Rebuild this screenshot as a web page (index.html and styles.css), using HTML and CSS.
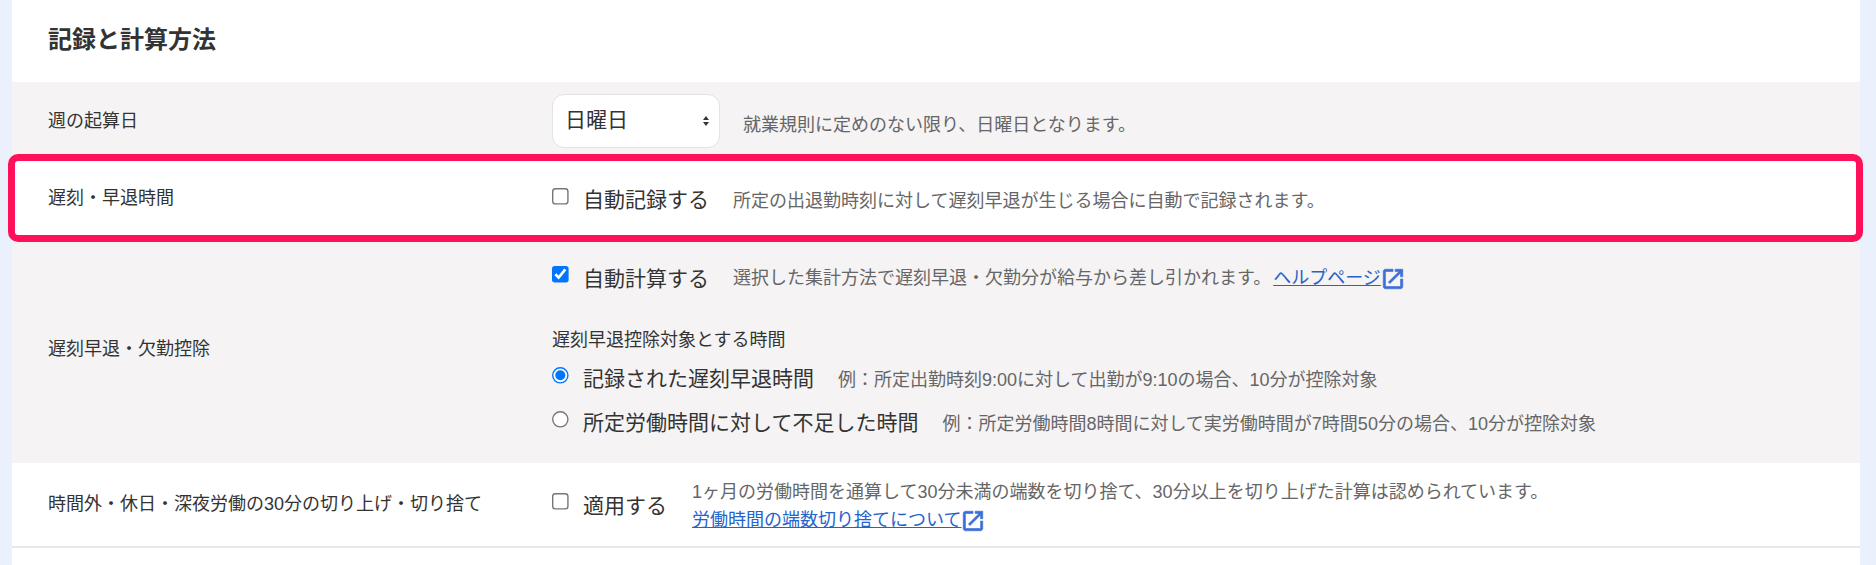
FILE: index.html
```html
<!DOCTYPE html>
<html lang="ja">
<head>
  <meta charset="UTF-8">
  <title>記録と計算方法</title>
  <link rel="stylesheet" href="styles.css">
</head>
<body>
  <div class="panel">
    <h2 class="panel-title">記録と計算方法</h2>

    <div class="row row-gray row-week">
      <div class="row-label">週の起算日</div>
      <div class="row-body">
        <div class="line">
          <div class="select">
            <span class="select-text">日曜日</span>
            <svg class="select-arrows" width="8" height="12" viewBox="0 0 8 12"><path d="M4 1 7 5H1zM4 11 1 7h6z" fill="#333"/></svg>
          </div>
          <span class="hint hint-select">就業規則に定めのない限り、日曜日となります。</span>
        </div>
      </div>
    </div>

    <div class="row row-late">
      <!-- annotation frame -->
      <div class="highlight"></div>
      <div class="row-label">遅刻・早退時間</div>
      <div class="row-body">
        <div class="line">
          <label class="check"><input type="checkbox"><span>自動記録する</span></label>
          <span class="hint">所定の出退勤時刻に対して遅刻早退が生じる場合に自動で記録されます。</span>
        </div>
      </div>
    </div>

    <div class="row row-gray row-deduct">
      <div class="row-label">遅刻早退・欠勤控除</div>
      <div class="row-body">
        <div class="line">
          <label class="check"><input type="checkbox" checked><span>自動計算する</span></label>
          <span class="hint">選択した集計方法で遅刻早退・欠勤分が給与から差し引かれます。<a class="help-link" href="#">ヘルプページ</a><svg class="ext-icon" width="26" height="26" viewBox="0 0 24 24"><path d="M19 19H5V5h7V3H5c-1.11 0-2 .9-2 2v14c0 1.1.89 2 2 2h14c1.1 0 2-.9 2-2v-7h-2v7zM14 3v2h3.59l-9.83 9.83 1.41 1.41L19 6.41V10h2V3h-7z"/></svg></span>
        </div>
        <div class="sub-title">遅刻早退控除対象とする時間</div>
        <div class="line line-radio">
          <label class="check"><input type="radio" name="target" checked><span>記録された遅刻早退時間</span></label>
          <span class="hint">例：所定出勤時刻9:00に対して出勤が9:10の場合、10分が控除対象</span>
        </div>
        <div class="line line-radio">
          <label class="check"><input type="radio" name="target"><span>所定労働時間に対して不足した時間</span></label>
          <span class="hint">例：所定労働時間8時間に対して実労働時間が7時間50分の場合、10分が控除対象</span>
        </div>
      </div>
    </div>

    <div class="row row-round">
      <div class="row-label">時間外・休日・深夜労働の30分の切り上げ・切り捨て</div>
      <div class="row-body">
        <div class="line">
          <label class="check"><input type="checkbox"><span>適用する</span></label>
          <div class="hint hint-block">
            <div>1ヶ月の労働時間を通算して30分未満の端数を切り捨て、30分以上を切り上げた計算は認められています。</div>
            <div><a href="#">労働時間の端数切り捨てについて</a><svg class="ext-icon" width="26" height="26" viewBox="0 0 24 24"><path d="M19 19H5V5h7V3H5c-1.11 0-2 .9-2 2v14c0 1.1.89 2 2 2h14c1.1 0 2-.9 2-2v-7h-2v7zM14 3v2h3.59l-9.83 9.83 1.41 1.41L19 6.41V10h2V3h-7z"/></svg></div>
          </div>
        </div>
      </div>
    </div>
  </div>
</body>
</html>
```

FILE: styles.css
```css
html, body {
  height: 100%;
}
body {
  margin: 0;
  background-color: #eaf1fd;
  color: #333;
  font-family: "Liberation Sans", "Noto Sans CJK JP", sans-serif;
  overflow: hidden;
}
.panel {
  margin: 0 16px 0 12px;
  background-color: white;
  height: 100%;
}
.panel-title {
  margin: 0;
  height: 82px;
  padding-left: 36px;
  box-sizing: border-box;
  font-size: 24px;
  font-weight: bold;
  line-height: 80px;
}
.row {
  display: grid;
  grid-template-columns: 540px 1fr;
  align-items: center;
  position: relative;
  box-sizing: border-box;
}
.row-gray {
  background-color: #f5f3f4;
}
.row-week {
  height: 79px;
}
.row-late {
  height: 74px;
}
.row-deduct {
  height: 228px;
}
.row-round {
  height: 85px;
  border-bottom: 2px solid #e8e8e8;
}
.row-label {
  padding-left: 36px;
  margin-bottom: 5px;
  font-size: 18px;
}
.row-deduct .row-body {
  padding-top: 6px;
}
.line {
  display: flex;
  align-items: center;
}
.check {
  display: flex;
  align-items: center;
  font-size: 21px;
}
/* scaled up as a whole so the native border and tick grow with the box */
.check input {
  zoom: 1.385;
  width: 13px;
  height: 13px;
  margin: 0 9.4px 1.5px 0;
}
.row-round .check {
  margin-bottom: 2px;
}
.select {
  display: flex;
  align-items: center;
  justify-content: space-between;
  box-sizing: border-box;
  width: 168px;
  height: 54px;
  margin-bottom: 2px;
  padding: 0 9px 0 12px;
  background-color: white;
  border: 1px solid #e3e3e3;
  border-radius: 12px;
  font-size: 21px;
}
.select-text {
  margin-bottom: 5px;
}
.hint {
  margin-left: 24px;
  margin-top: 2px;
  font-size: 18px;
  color: #666;
}
.hint-select {
  margin-left: 23px;
}
.hint-block {
  margin-left: 25px;
  margin-top: 3px;
  line-height: 28px;
}
.hint a, .hint-block a {
  color: #2563cc;
}
.help-link {
  margin-left: 2px;
}
.ext-icon {
  fill: #3a6fd8;
  stroke: #3a6fd8;
  stroke-width: 0.6;
  vertical-align: middle;
  margin-left: -1px;
}
.sub-title {
  margin: 33px 0 4px;
  font-size: 18px;
}
.line-radio {
  height: 44px;
}
.highlight {
  position: absolute;
  z-index: 1;
  top: -7px;
  bottom: -7px;
  left: -4px;
  right: -3px;
  border: 7px solid #ff1159;
  border-radius: 10px;
}
```
